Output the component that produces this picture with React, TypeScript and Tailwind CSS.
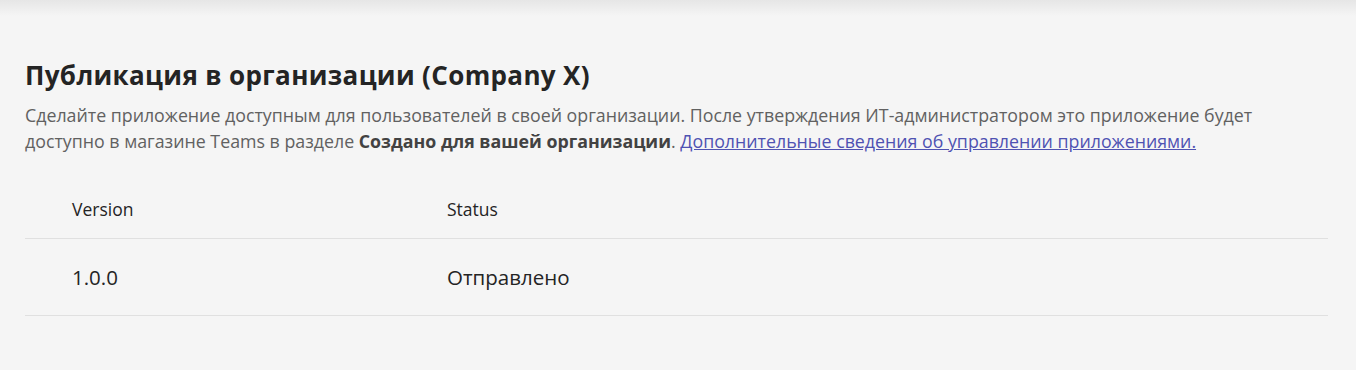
import React from "react";

const rows = [{ version: "1.0.0", status: "Отправлено" }];

const App = () => {
  return (
    <div className="relative min-h-[370px] bg-[#f5f5f5] font-['Open_Sans',sans-serif]">
      {/* top shadow */}
      <div className="h-[16px] bg-gradient-to-b from-[#e6e6e6] to-[#f5f5f5]" />

      <main className="px-[25px] pt-[41px]">
        <h1 className="text-[26px] font-bold leading-[36px] tracking-[0.35px] text-[#242424]">
          Публикация в организации (Company X)
        </h1>
        <p className="mt-[9px] text-[17.8px] leading-[26px] text-[#616161]">
          Сделайте приложение доступным для пользователей в своей организации. После утверждения ИТ-администратором это
          приложение будет доступно в магазине Teams в разделе{" "}
          <span className="font-bold text-[#424242]">Создано для вашей организации</span>.{" "}
          <a href="#" className="text-[#4f52b2] underline">
            Дополнительные сведения об управлении приложениями.
          </a>
        </p>

        {/* Table */}
        <div className="mt-[26px] mr-[3px]">
          <div className="grid grid-cols-[375px_1fr] border-b border-[#e0e0e0] h-[59px] items-center pl-[47px] text-[17.5px] text-[#242424]">
            <div>Version</div>
            <div>Status</div>
          </div>
          {rows.map((r) => (
            <div
              key={r.version}
              className="grid grid-cols-[375px_1fr] border-b border-[#e0e0e0] h-[77px] items-center pl-[47px] text-[20.5px] text-[#242424]"
            >
              <div>{r.version}</div>
              <div>{r.status}</div>
            </div>
          ))}
        </div>
      </main>
    </div>
  );
};

export default App;
